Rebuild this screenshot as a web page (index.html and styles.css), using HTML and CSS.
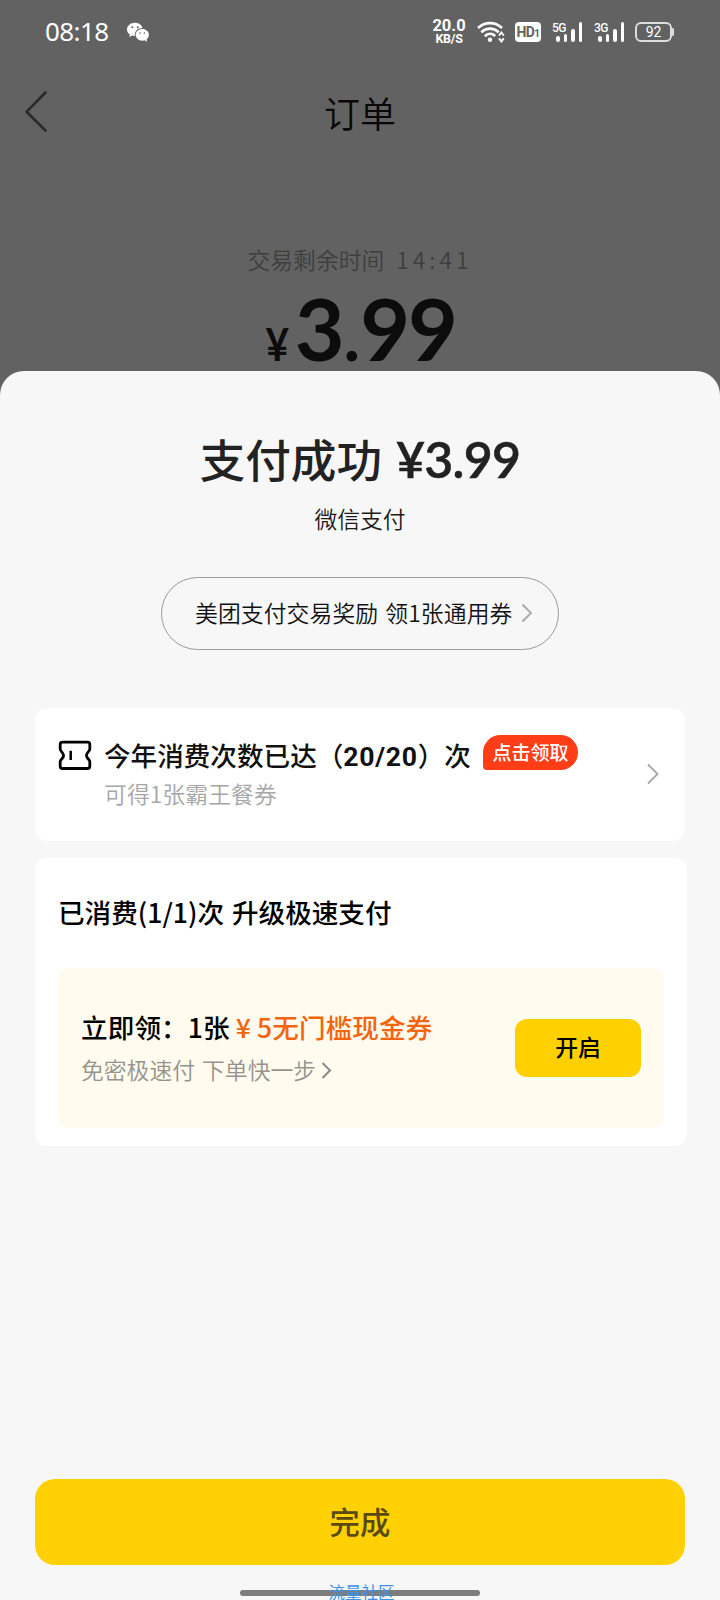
FILE: index.html
```html
<!DOCTYPE html>
<html lang="zh-CN">
<head>
<meta charset="utf-8">
<title>订单</title>
<link rel="stylesheet" href="styles.css">
</head>
<body>
<div class="screen">
  <div class="status">
    <span class="clock">08:18</span>
    <svg class="wechat" width="24" height="21" viewBox="0 0 24 21">
      <path fill="#fff" d="M9 0.800C4.500 0.800 1 3.700 1 7.400c0 2.100 1.100 3.900 2.900 5.100L3.200 15l2.900-1.500c.9.300 1.900.4 2.800.4C8.300 9.500 11.500 6 16.600 6.100 15.800 3 12.700.8 9 .8z"/>
      <path fill="#fff" d="M16.300 7c-3.700 0-6.600 2.500-6.600 5.800s2.900 5.900 6.600 5.900c.8 0 1.600-.1 2.300-.4l2.500 1.400-.6-2.300c1.500-1.100 2.400-2.700 2.400-4.600C22.900 9.500 20 7 16.300 7z"/>
      <g fill="#626262"><circle cx="6.300" cy="5.300" r="1"/><circle cx="11.700" cy="5.300" r="1"/><circle cx="14" cy="11" r=".8"/><circle cx="18.400" cy="11" r=".8"/></g>
    </svg>
    <div class="speed"><span class="speed-num">20.0</span><span class="speed-unit">KB/S</span></div>
    <svg class="wifi" width="28" height="22" viewBox="0 0 28 22">
      <g fill="none" stroke="#fff" stroke-width="2.700">
        <path d="M1 7C8 .6 18 .6 25 7"/><path d="M4.300 11.300c5.200-4.900 12.200-4.900 17.400 0"/><path d="M7.800 15.200c3-3 7.300-3 10.400-.2"/>
      </g>
      <circle cx="13" cy="18.800" r="2.200" fill="#fff"/>
      <path d="M22 14.500l2.400-3 2.400 3M22 17.300l2.400 3 2.400-3" fill="none" stroke="#fff" stroke-width="2"/>
    </svg>
    <div class="hd">HD<small>1</small></div>
    <div class="signal"><span class="net">5G</span><i class="b1"></i><i class="b2"></i><i class="b3"></i><i class="b4"></i></div>
    <div class="signal second"><span class="net">3G</span><i class="b1"></i><i class="b2"></i><i class="b3"></i><i class="b4"></i></div>
    <div class="battery">92</div><i class="battery-tip"></i>
  </div>

  <div class="nav">
    <svg class="back" width="24" height="42" viewBox="0 0 24 42"><path d="M21.500 1.500L2.500 20.800l19 18.700" fill="none" stroke="#2a2a2a" stroke-width="2.600" stroke-linecap="round" stroke-linejoin="round"/></svg>
    <h1 class="nav-title">订单</h1>
  </div>
  <div class="countdown">交易剩余时间<span class="countdown-time">14:41</span></div>
  <div class="order-price"><span class="yen">¥</span><span>3<span class="point">.</span>99</span></div>

  <main class="sheet">
    <h2 class="paid">支付成功<span class="paid-sum">¥3.99</span></h2>
    <p class="method">微信支付</p>
    <div class="pill"><span>美团支付交易奖励 领1张通用券</span>
      <svg width="12" height="20" viewBox="0 0 12 20"><path d="M1.500 1.500L10 10l-8.500 8.500" fill="none" stroke="#aaa" stroke-width="1.900"/></svg>
    </div>

    <section class="card reward">
      <svg class="ticket" width="34" height="31" viewBox="0 0 34 31">
        <path d="M4.500 2.200h25q2.300 0 2.300 2.300v4.800c0 2-3.400 3.400-3.400 6.100s3.400 4.200 3.400 6.200v4.700q0 2.200-2.300 2.200h-25q-2.300 0-2.300-2.200v-4.700c0-2 3.400-3.500 3.400-6.200S2.200 11.300 2.200 9.300V4.500Q2.200 2.200 4.500 2.200z" fill="none" stroke="#000" stroke-width="2.800"/>
        <path d="M12.700 10.800v9.200" stroke="#000" stroke-width="2.500"/>
      </svg>
      <div class="reward-body">
        <div class="reward-line"><span class="reward-title">今年消费次数已达（<b class="count">20/20</b>）次</span><span class="badge">点击领取</span></div>
        <div class="reward-sub">可得1张霸王餐券</div>
      </div>
      <svg class="more" width="14" height="22" viewBox="0 0 14 22"><path d="M2 1.500l9.500 9.500L2 20.500" fill="none" stroke="#aaa" stroke-width="1.900"/></svg>
    </section>

    <section class="card upgrade">
      <h3 class="upgrade-title">已消费<span class="count-inline">(1/1)</span>次 升级极速支付</h3>
      <div class="offer">
        <div class="offer-text">
          <div class="offer-title">立即领：<span>1张</span><span class="offer-value"><span class="offer-yen">¥</span>5无门槛现金券</span></div>
          <div class="offer-sub">免密极速付 下单快一步<svg width="12" height="19" viewBox="0 0 12 19"><path d="M1.500 2l7.500 7.500L1.500 17" fill="none" stroke="#888" stroke-width="2"/></svg></div>
        </div>
        <button class="enable">开启</button>
      </div>
    </section>

    <button class="done">完成</button>
    <div class="footer"><i class="home-bar"></i><span class="community">流量社区</span></div>
  </main>
</div>
</body>
</html>
```
FILE: styles.css
```css
* { box-sizing: border-box; }
body { margin: 0; font-family: "Noto Sans CJK SC", sans-serif; }
h1, h2, h3, p { margin: 0; font-weight: 400; }
button { border: 0; padding: 0; font-family: inherit; }
svg { display: block; flex: none; }
.screen { width: 720px; height: 1600px; overflow: hidden; background: #626262; display: flex; flex-direction: column; white-space: nowrap; }

.status { height: 64px; flex: none; display: flex; align-items: center; padding-left: 45px; color: #fff; }
.clock { width: 81px; margin-top: -2px; font: 400 26px/30px "Noto Sans", sans-serif; letter-spacing: -0.6px; }
.wechat { width: 24px; }
.speed { width: 34px; margin-left: 282px; display: flex; flex-direction: column; align-items: center; font-family: Roboto, sans-serif; font-weight: 700; }
.speed-num { font-size: 16.500px; line-height: 13px; }
.speed-unit { font-size: 12.500px; line-height: 13px; letter-spacing: -0.3px; }
.wifi { margin-left: 11px; }
.hd { width: 26px; height: 20px; margin-left: 10px; border-radius: 4px; background: #fff; color: #626262; font: 700 14px/21px "Roboto", sans-serif; text-align: center; letter-spacing: -0.6px; }
.hd small { font-size: 10px; }
.signal { position: relative; width: 30px; height: 20px; margin-left: 11px; padding-left: 4px; display: flex; align-items: flex-end; gap: 4px; }
.signal i { width: 3.600px; border-radius: 2px; background: #fff; }
.signal.second { margin-left: 12px; }
.net { position: absolute; left: 0; top: 0; font: 500 12px/12px Roboto, sans-serif; letter-spacing: -0.5px; }
.b1 { height: 6px; } .b2 { height: 8px; } .b3 { height: 13px; } .b4 { height: 20px; }
.battery { width: 37px; height: 20px; margin-left: 11px; border: 2px solid #ddd; border-radius: 6px; font: 400 14px/16px Roboto, sans-serif; text-align: center; }
.battery-tip { width: 2px; height: 8px; border-radius: 1px; background: #ddd; }

.nav { height: 96px; flex: none; display: grid; grid-template-columns: 60px 1fr 60px; align-items: center; }
.back { margin-left: 24px; }
.nav-title { text-align: center; font-size: 36px; line-height: 48px; font-weight: 350; color: #080808; }
.countdown { margin-top: 82px; height: 36px; display: flex; justify-content: center; font-size: 22.800px; line-height: 36px; font-weight: 350; color: #3e3e3e; }
.countdown-time { margin-left: 12px; letter-spacing: 4px; }
.order-price { height: 94px; margin-top: 3px; display: flex; justify-content: center; align-items: baseline; font: 700 86px/94px Lato, sans-serif; color: #0c0c0c; letter-spacing: -2px; }
.point { margin: 0 2px 0 1px; font-size: 70px; }
.yen { font-size: 46px; margin-right: 6px; transform: scaleX(0.88); }

.sheet { position: relative; height: 1229px; margin-top: -4px; flex: none; padding: 0 35px; display: flex; flex-direction: column; background: #f7f7f7; border-radius: 24px 24px 0 0; }
.paid { margin-top: 57px; height: 60px; display: flex; justify-content: center; align-items: baseline; font-size: 45.600px; line-height: 60px; font-weight: 500; color: #222; }
.paid-sum { margin-left: 14px; font: 600 50px/60px Lato, sans-serif; letter-spacing: -0.7px; -webkit-text-stroke: 0.5px #222; }
.method { margin-top: 14px; text-align: center; font-size: 22.800px; line-height: 34px; font-weight: 350; color: #1a1a1a; }
.pill { width: 398px; height: 73px; margin: 41px auto 0; padding: 0 0 1px 33px; display: flex; align-items: center; gap: 9px; border: 1px solid #999; border-radius: 37px; font-size: 22.800px; line-height: 34px; font-weight: 350; letter-spacing: 0.1px; word-spacing: 2px; color: #111; }

.card { background: #fff; border-radius: 12px; }
.reward { height: 133px; margin-top: 58px; padding: 27px 26px 0 23px; display: flex; align-items: flex-start; }
.ticket { margin-top: 5px; }
.reward-body { flex: 1; margin-left: 12px; }
.reward-line { display: flex; height: 39px; }
.reward-title { margin-top: 1px; font-size: 26.600px; line-height: 38px; font-weight: 500; color: #111; }
.count { font: 700 26.600px/38px Roboto, sans-serif; letter-spacing: 0.7px; }
.badge { width: 95px; height: 35px; margin-left: 12px; border-radius: 18px 18px 18px 4px; background: #ff3d17; color: #fff; font-size: 19px; line-height: 34px; font-weight: 500; text-align: center; }
.reward-sub { font-size: 22.800px; line-height: 39px; font-weight: 350; letter-spacing: 0.1px; color: #a6a6a6; }
.more { margin: 28px -1px 0 0; }

.upgrade { width: 652px; height: 288px; margin-top: 17px; padding: 35px 23px 0; }
.upgrade-title { height: 38px; font-size: 26.600px; line-height: 38px; font-weight: 500; word-spacing: 2px; color: #000; }
.offer { height: 160px; margin-top: 37px; padding: 0 23px; display: flex; justify-content: space-between; align-items: flex-start; border-radius: 12px; background: #fffbef; }
.offer-text { padding-top: 39px; }
.offer-title { font-size: 26.600px; line-height: 40px; font-weight: 500; letter-spacing: 0.1px; color: #000; }
.offer-value { color: #f3650c; }
.offer-yen { margin: 0 6px; }
.offer-sub { display: flex; align-items: center; gap: 5px; margin-top: 1px; font-size: 22.800px; line-height: 44px; font-weight: 350; word-spacing: 2px; color: #96938c; }
.enable { width: 126px; height: 58px; margin-top: 51px; padding-bottom: 2px; border-radius: 12px; background: #ffd000; color: #000; font-size: 22.800px; line-height: 56px; font-weight: 500; }

.done { height: 86px; flex: none; margin-top: 333px; padding-bottom: 1px; border-radius: 20px; background: #ffd104; color: #594a12; font-size: 30.400px; line-height: 85px; font-weight: 500; }
.footer { position: relative; height: 35px; display: flex; justify-content: center; padding: 17px 0 0 3px; }
.community { position: relative; font-size: 16.500px; line-height: 20px; color: #3b93e8; }
.home-bar { position: absolute; left: 205px; top: 25px; width: 240px; height: 6px; border-radius: 3px; background: #7d7d7d; }
```
